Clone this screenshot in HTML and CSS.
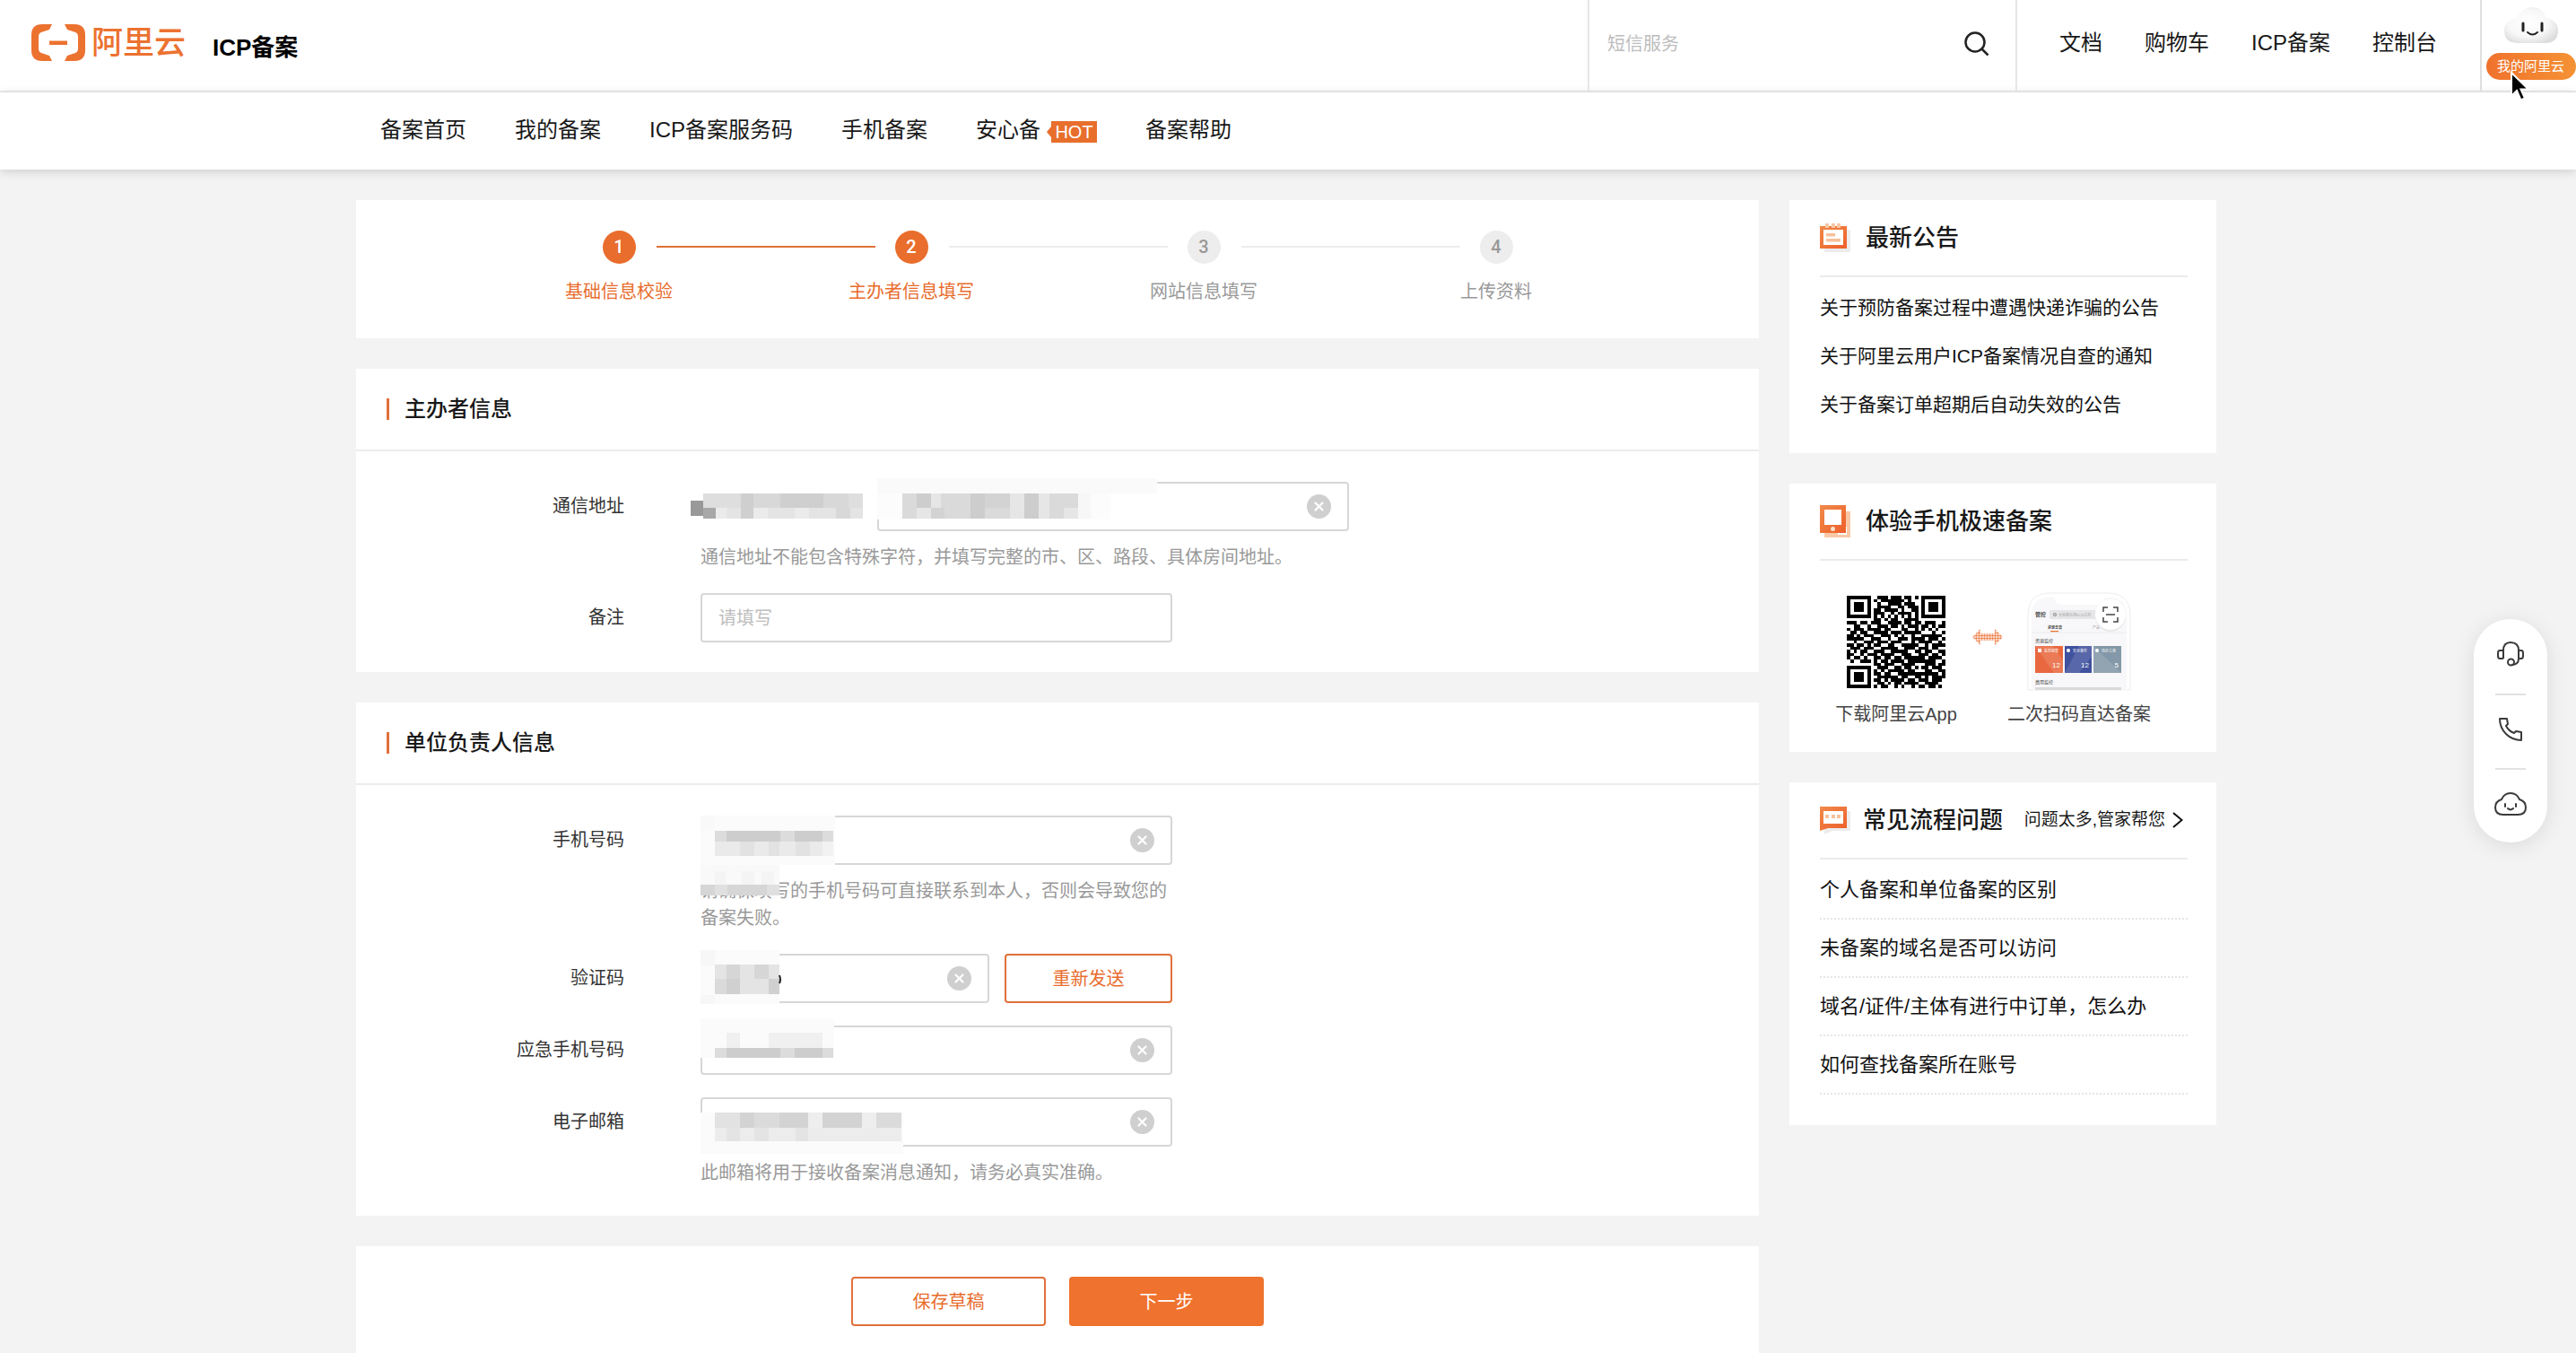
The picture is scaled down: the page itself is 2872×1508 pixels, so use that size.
FILE: index.html
```html
<!DOCTYPE html>
<html lang="zh-CN">
<head>
<meta charset="utf-8">
<title>ICP备案</title>
<link rel="stylesheet" href="styles.css">
</head>
<body>
<svg width="0" height="0" class="defs" aria-hidden="true">
  <defs>
    <linearGradient id="orange" x1="0" y1="0" x2="1" y2="1"><stop offset="0" stop-color="#f08a4a"/><stop offset="1" stop-color="#ee5f2a"/></linearGradient>
    <symbol id="clear" viewBox="0 0 27 27"><circle cx="13.5" cy="13.5" r="13.5" fill="#cfcfcf"/><path d="M9.500 9.500l8 8M17.500 9.500l-8 8" stroke="#fff" stroke-width="2.200" stroke-linecap="round"/></symbol>
  </defs>
</svg>

<header class="top">
  <a class="logo" href="#">
    <svg width="60" height="41" viewBox="0 0 60 41" fill="#ec7230"><path d="M23 0H12Q0 0 0 12V29Q0 41 12 41H23L20 35L11 32Q8 31 8 27V14Q8 10 11 9L20 6Z"/><path d="M37 0H48Q60 0 60 12V29Q60 41 48 41H37L40 35L49 32Q52 31 52 27V14Q52 10 49 9L40 6Z"/><path d="M20 18.500h20v4.500H20z"/></svg>
    <span class="logo-name">阿里云</span>
  </a>
  <a class="product" href="#">ICP备案</a>
  <form class="search">
    <input type="text" placeholder="短信服务" aria-label="搜索">
    <button type="button" aria-label="搜索"><svg width="30" height="30" viewBox="0 0 30 30" fill="none" stroke="#222" stroke-width="2.500"><circle cx="13" cy="13" r="10.500"/><path d="M20.500 20.500l7 7"/></svg></button>
  </form>
  <nav class="tools"><a href="#">文档</a><a href="#">购物车</a><a href="#">ICP备案</a><a href="#">控制台</a></nav>
  <a class="mine" href="#">
    <svg width="60" height="41" viewBox="0 0 60 41"><defs><radialGradient id="cloud" cx=".45" cy=".45" r=".62"><stop offset="0" stop-color="#fff"/><stop offset=".6" stop-color="#f8f8f8"/><stop offset="1" stop-color="#dcdcdc"/></radialGradient></defs><path d="M14 12Q20 0 31 0Q42 0 47 12Q60 15 60 26Q60 40 45 40H15Q0 40 0 26Q0 15 14 12Z" fill="url(#cloud)"/><path d="M21 18v8M42 18v8" stroke="#222" stroke-width="3" stroke-linecap="round"/><path d="M26 28q5.500 5 11 0" stroke="#222" stroke-width="2" fill="none" stroke-linecap="round"/></svg>
    <span>我的阿里云</span>
    <svg class="cursor" width="24" height="36" viewBox="0 0 24 36"><path d="M2 2V28L8 22L12.500 32.500L17 30.500L12.500 20.500H21Z" stroke="#fff" stroke-width="2"/></svg>
  </a>
</header>

<nav class="menu">
  <a href="#">备案首页</a><a href="#">我的备案</a><a href="#">ICP备案服务码</a><a href="#">手机备案</a><a class="with-hot" href="#">安心备<span class="hot">HOT</span></a><a href="#">备案帮助</a>
</nav>

<div class="page">
  <main>
    <ol class="card steps">
      <li class="done"><span class="num">1</span><span>基础信息校验</span></li>
      <li class="current"><span class="num">2</span><span>主办者信息填写</span></li>
      <li><span class="num">3</span><span>网站信息填写</span></li>
      <li><span class="num">4</span><span>上传资料</span></li>
    </ol>

    <section class="card">
      <h2>主办者信息</h2>
      <div class="fields">
        <div class="field">
          <label for="addr">通信地址</label>
          <div class="control wide">
            <div class="box push"><input id="addr" type="text"><button class="clear" type="button" aria-label="清除"><svg width="27" height="27"><use href="#clear"/></svg></button></div>
            <svg class="mask mask-addr" width="533" height="48" viewBox="0 0 533 48" shape-rendering="crispEdges">
              <path fill="#fafafa" d="M209 0h312v17h-312z"/><path fill="#fcfcfc" d="M209 17h260v29h-260z"/>
              <path fill="#999" d="M1 25h14v17H1z"/>
              <path fill="#dedede" d="M15 17h178v16H15z"/><path fill="#e4e4e4" d="M15 33h178v12H15z"/>
              <path fill="#a8a8a8" d="M15 33h14v12H15z"/>
              <path fill="#cfcfcf" d="M57 17h14v28H57zM101 17h48v16h-48z"/><path fill="#ebebeb" d="M29 33h12v12H29zM71 33h16v12H71zM117 33h16v12h-16z"/>
              <path fill="#d8d8d8" d="M71 17h30v16H71zM149 17h28v16h-28zM163 33h16v12h-16z"/>
              <path fill="#dadada" d="M237 17h196v28H237z"/><path fill="#cdcdcd" d="M253 17h16v16h-16zM313 17h16v28h-16zM373 17h16v28h-16z"/>
              <path fill="#e6e6e6" d="M269 17h11v16h-11zM253 33h16v12h-16zM357 17h16v28h-16zM389 17h12v28h-12zM417 33h16v12h-16z"/><path fill="#d3d3d3" d="M329 17h28v16h-28zM269 33h15v12h-15z"/>
              <path fill="#f7f7f7" d="M433 17h14v28h-14z"/>
            </svg>
            <p class="hint">通信地址不能包含特殊字符，并填写完整的市、区、路段、具体房间地址。</p>
          </div>
        </div>
        <div class="field">
          <label for="note">备注</label>
          <div class="control"><div class="box"><input id="note" type="text" placeholder="请填写"></div></div>
        </div>
      </div>
    </section>

    <section class="card">
      <h2>单位负责人信息</h2>
      <div class="fields">
        <div class="field">
          <label for="phone">手机号码</label>
          <div class="control">
            <div class="box"><input id="phone" type="text"><button class="clear" type="button" aria-label="清除"><svg width="27" height="27"><use href="#clear"/></svg></button></div>
            <svg class="mask" width="150" height="90" viewBox="0 0 150 90" shape-rendering="crispEdges">
              <path fill="#fbfbfb" d="M0 0h150v55H0z"/><path fill="#f9f9f9" d="M0 0h16v17H0zM0 55h88v34H0z"/><path fill="#f4f4f4" d="M16 62h12v15H16zM46 62h14v15H46zM68 62h14v15H68z"/>
              <path fill="#dcdcdc" d="M16 17h132v12H16z"/><path fill="#cdcdcd" d="M29 17h60v12H29zM105 17h31v12h-31z"/>
              <path fill="#eaeaea" d="M16 29h120v16H16z"/><path fill="#e2e2e2" d="M44 29h16v16H44zM76 29h12v16H76zM106 29h16v16h-16z"/><path fill="#f2f2f2" d="M136 29h12v16h-12z"/>
              <path fill="#d6d6d6" d="M0 77h88v12H0z"/><path fill="#e0e0e0" d="M16 77h14v12H16zM74 77h14v12H74z"/>
            </svg>
            <p class="hint">请确保填写的手机号码可直接联系到本人，否则会导致您的备案失败。</p>
          </div>
        </div>
        <div class="field">
          <label for="code">验证码</label>
          <div class="control pair">
            <div class="box"><input id="code" type="text"><button class="clear" type="button" aria-label="清除"><svg width="27" height="27"><use href="#clear"/></svg></button></div>
            <button class="btn" type="button">重新发送</button>
            <svg class="mask mask-up" width="92" height="60" viewBox="0 0 92 60">
              <path fill="#fbfbfb" d="M0 0h88v60H0z"/><path fill="#f7f7f7" d="M0 0h16v17H0zM0 50h16v10H0z"/>
              <path fill="#e4e4e4" d="M16 16h72v33H16z"/><path fill="#d6d6d6" d="M29 16h15v16H29zM60 16h16v16H60z"/><path fill="#d0d0d0" d="M29 32h15v17H29zM76 32h12v17H76z"/><path fill="#dadada" d="M16 32h13v17H16z"/>
              <path d="M88 28q2 5 0 9" stroke="#222" stroke-width="2" fill="none"/>
            </svg>
          </div>
        </div>
        <div class="field">
          <label for="phone2">应急手机号码</label>
          <div class="control">
            <div class="box"><input id="phone2" type="text"><button class="clear" type="button" aria-label="清除"><svg width="27" height="27"><use href="#clear"/></svg></button></div>
            <svg class="mask mask-high" width="149" height="44" viewBox="0 0 149 44" shape-rendering="crispEdges">
              <path fill="#fbfbfb" d="M0 0h149v44H0z"/><path fill="#f0f0f0" d="M29 16h15v17H29zM76 16h60v17H76z"/>
              <path fill="#dcdcdc" d="M16 33h132v11H16z"/><path fill="#cdcdcd" d="M29 33h60v11H29zM105 33h31v11h-31z"/>
            </svg>
          </div>
        </div>
        <div class="field">
          <label for="mail">电子邮箱</label>
          <div class="control">
            <div class="box"><input id="mail" type="text"><button class="clear" type="button" aria-label="清除"><svg width="27" height="27"><use href="#clear"/></svg></button></div>
            <svg class="mask mask-low" width="226" height="46" viewBox="0 0 226 46" shape-rendering="crispEdges">
              <path fill="#fbfbfb" d="M0 0h226v46H0z"/><path fill="#e2e2e2" d="M16 0h208v17H16z"/><path fill="#d3d3d3" d="M44 0h76v17H44zM136 0h44v17h-44z"/><path fill="#dbdbdb" d="M60 0h28v17H60zM196 0h28v17h-28z"/><path fill="#eee" d="M120 0h16v17h-16zM180 0h16v17h-16z"/>
              <path fill="#ececec" d="M16 17h208v15H16z"/><path fill="#e4e4e4" d="M29 17h15v15H29zM60 17h16v15H60zM106 17h14v15h-14z"/>
            </svg>
            <p class="hint">此邮箱将用于接收备案消息通知，请务必真实准确。</p>
          </div>
        </div>
      </div>
    </section>

    <div class="card actions">
      <button class="btn" type="button">保存草稿</button>
      <button class="btn primary" type="submit">下一步</button>
    </div>
  </main>

  <aside>
    <section class="card">
      <div class="head">
        <svg width="34" height="34" viewBox="0 0 34 34"><path fill="#ececec" d="M5 8h29v25H5z"/><path fill="url(#orange)" d="M0 4h30v25H0z"/><path fill="#f9c9a6" d="M6 1h4v5H6zM13 1h4v5h-4zM19 1h4v5h-4z"/><path fill="#fff" d="M4 8h22v17H4z"/><path fill="#f8c09a" d="M7 12h10v3.500H7zM7 18h16v3.500H7z"/></svg>
        <h3>最新公告</h3>
      </div>
      <ul class="news"><li><a href="#">关于预防备案过程中遭遇快递诈骗的公告</a></li><li><a href="#">关于阿里云用户ICP备案情况自查的通知</a></li><li><a href="#">关于备案订单超期后自动失效的公告</a></li></ul>
    </section>

    <section class="card">
      <div class="head">
        <svg width="34" height="36" viewBox="0 0 34 36"><path fill="#f9c9a6" d="M5 7h29v29H5z"/><path fill="#fff" d="M20 24h10v9H20z"/><path fill="url(#orange)" d="M0 0h29v31H0z"/><path fill="#fff" d="M5 5h19v17H5z"/><circle cx="14.500" cy="26.500" r="2.500" fill="#fde0cc"/></svg>
        <h3>体验手机极速备案</h3>
      </div>
      <div class="app">
        <figure><div class="shot"><svg id="qr" width="110" height="103" viewBox="0 0 29 29" preserveAspectRatio="none" shape-rendering="crispEdges"></svg></div><figcaption>下载阿里云App</figcaption></figure>
        <svg class="swap" width="34" height="18" viewBox="0 0 34 18"><defs><pattern id="dots" width="3" height="3" patternUnits="userSpaceOnUse"><circle cx="1.500" cy="1.500" r="1.300" fill="#ee7c45"/></pattern></defs><path fill="url(#dots)" d="M0 9L9 0V5H25V0L34 9L25 18V13H9V18Z"/></svg>
        <figure><div class="shot"><svg width="116" height="110" viewBox="0 0 116 110" font-size="5" fill="#444">
          <path d="M1 109V26Q1 1 26 1H90Q115 1 115 26V109Z" fill="#fff" stroke="#ededed"/>
          <path d="M5 109V26Q5 6 24 6H30Q32 14 40 14H76Q84 14 86 6H92Q111 6 111 26V109Z" fill="#f8f7f9"/>
          <text x="9" y="27" font-size="6" font-weight="700">管控</text><rect x="25" y="20" width="56" height="10" rx="2" fill="#e6e6e8"/><circle cx="31" cy="25" r="1.500" fill="none" stroke="#888"/><text x="35" y="27" font-size="4" fill="#aaa">大家都在搜ECS文档</text>
          <text x="23" y="41" font-size="4" font-weight="700">资源总览</text><path d="M26 43h9v1.500h-9z" fill="#ec7230"/><text x="73" y="41" font-size="4" fill="#999">产品</text><path d="M5 45h106" stroke="#ededed"/>
          <text x="9" y="56">资源监控</text>
          <path fill="#e9683f" d="M9 60h31v30H9z"/><path fill="#40529e" d="M42 60h30v30H42z"/><path fill="#8398a8" d="M74 60h31v30H74z"/>
          <path fill="#fff" opacity=".12" d="M9 60h20l11 16v14H30zM42 90l16-30h14v12L58 90zM74 60l31 30H74z"/>
          <g fill="#fff"><path d="M12 63h4v4h-4z"/><circle cx="46" cy="65" r="2"/><circle cx="78" cy="65" r="2"/><g font-size="4"><text x="19" y="67">监控报警</text><text x="51" y="67">安全事件</text><text x="83" y="67">待办工单</text></g><g font-size="8" text-anchor="end"><text x="37" y="84">12</text><text x="69" y="84">12</text><text x="102" y="84">5</text></g></g>
          <text x="9" y="102">费用监控</text><path fill="#dadadd" d="M9 106h96v3H9z"/>
          <circle cx="93" cy="27" r="17" fill="#e9e9ea"/><circle cx="93" cy="25" r="17" fill="#fff"/>
          <path d="M85 22v-5h5M96 17h5v5M85 28v5h5M96 33h5v-5M88 25h10" fill="none" stroke="#444" stroke-width="1.500"/>
        </svg></div><figcaption>二次扫码直达备案</figcaption></figure>
      </div>
    </section>

    <section class="card">
      <div class="head faq-head">
        <svg width="34" height="32" viewBox="0 0 34 32"><path fill="#ececec" d="M5 6h29v22H14l-9 4z"/><path fill="url(#orange)" d="M0 1h30v24H9l-9 3z"/><path fill="#fff" d="M4 6h22v14H4z"/><path fill="#f8c09a" d="M6 10h4v4H6zM13 10h4v4h-4zM19 10h4v4h-4z"/></svg>
        <h3>常见流程问题</h3>
        <a class="more" href="#">问题太多,管家帮您<svg width="12" height="18" viewBox="0 0 12 18" fill="none" stroke="#111" stroke-width="2"><path d="M1 1l9.500 8L1 17"/></svg></a>
      </div>
      <ul class="faq"><li><a href="#">个人备案和单位备案的区别</a></li><li><a href="#">未备案的域名是否可以访问</a></li><li><a href="#">域名/证件/主体有进行中订单，怎么办</a></li><li><a href="#">如何查找备案所在账号</a></li></ul>
    </section>
  </aside>
</div>

<div class="dock">
  <button type="button" aria-label="在线客服"><svg width="32" height="28" viewBox="0 0 32 28" fill="none" stroke="#3a3a3a" stroke-width="2"><path d="M8 19V10Q8 1 16 1Q25 1 25 10V19Q25 26 17 26"/><path d="M8 10H4Q2 10 2 13V16Q2 19 4 19H8M25 10H28Q30 10 30 13V16Q30 19 28 19H25"/><circle cx="16.500" cy="23" r="3.500"/></svg></button>
  <button type="button" aria-label="电话"><svg width="26" height="26" viewBox="0 0 26 26" fill="none" stroke="#3a3a3a" stroke-width="2" stroke-linejoin="round"><path d="M1 1H9L10 7L8 9Q11 15 17 17L19 15L25 16V25Q15 25 8 18Q1 11 1 1Z"/></svg></button>
  <button type="button" aria-label="智能助手"><svg width="36" height="26" viewBox="0 0 36 26" fill="none" stroke="#3a3a3a" stroke-width="2" stroke-linecap="round"><path d="M8 8Q11 1 18 1Q25 1 28 8Q35 10 35 17Q35 25 26 25H10Q1 25 1 17Q1 10 8 8Z"/><path d="M12 13v3M24 13v3M15 18q3 3 6 0"/></svg></button>
</div>
<script src="qr.js"></script>
</body>
</html>
```
FILE: styles.css
```css
* { box-sizing: border-box; }
body {
  margin: 0;
  min-height: 100vh;
  background: #f3f3f3;
  color: #181818;
  font: 20px/30px "Liberation Sans", "Noto Sans CJK SC", sans-serif;
}
a { color: inherit; text-decoration: none; }
button, input { font: inherit; color: inherit; }
button { padding: 0; border: 0; background: none; cursor: pointer; }
ul, ol { list-style: none; margin: 0; padding: 0; }
h2, h3, p, figure { margin: 0; }
svg { display: block; flex: none; }
.defs { position: absolute; }

.top {
  display: flex;
  height: 103px;
  background: #fff;
  border-bottom: 2px solid #ececec;
}
.logo { display: flex; align-items: center; gap: 7px; height: 95px; margin-left: 35px; }
.logo-name { color: #ec7230; font-size: 35px; line-height: 40px; font-weight: 500; }
.product { margin-left: 30px; color: #000; font-size: 26px; line-height: 106px; font-weight: 700; }
.search {
  display: flex;
  align-items: center;
  width: 479px;
  margin-left: auto;
  padding: 0 28px 4px 20px;
  border: solid #e6e6e6;
  border-width: 0 2px;
}
.search input { flex: 1; min-width: 0; padding: 0; border: 0; outline: 0; }
::placeholder { color: #bdbdbd; opacity: 1; }
.tools {
  display: flex;
  gap: 47px;
  padding: 0 48px 0 47px;
  font-size: 24px;
  line-height: 96px;
}
.mine {
  position: relative;
  display: flex;
  flex-direction: column;
  align-items: center;
  gap: 10px;
  width: 107px;
  padding: 8px 0 0 4px;
  border-left: 2px solid #dedede;
}
.mine span {
  width: 100px;
  border-radius: 15px;
  background: linear-gradient(90deg, #f0722d, #f59235);
  color: #fff;
  font-size: 15px;
  line-height: 30px;
  text-align: center;
}
.cursor { position: absolute; left: 31px; top: 79px; z-index: 2; }

.menu {
  display: flex;
  gap: 54px;
  padding-left: 424px;
  height: 86px;
  background: #fff;
  box-shadow: 0 2px 10px rgba(0, 0, 0, .16);
  font-size: 24px;
  line-height: 84px;
}
.with-hot { display: flex; align-items: flex-start; gap: 12px; }
.hot {
  position: relative;
  width: 51px;
  margin-top: 32px;
  background: #e86e2c;
  color: #fff;
  font-size: 20px;
  line-height: 24px;
  text-align: center;
}
.hot::before {
  content: "";
  position: absolute;
  left: -5px;
  top: 6px;
  border: solid transparent;
  border-width: 6px 5px 6px 0;
  border-right-color: #e86e2c;
}

.page {
  display: grid;
  grid-template-columns: minmax(0, 1fr) 476px;
  align-items: start;
  gap: 34px;
  max-width: 2078px;
  margin: 34px auto 0;
  padding-right: 4px;
}
main, aside { display: flex; flex-direction: column; gap: 34px; }
.card { background: #fff; }

.steps { display: flex; justify-content: center; padding: 34px 0 37px; }
.steps li {
  position: relative;
  display: flex;
  flex-direction: column;
  align-items: center;
  gap: 16px;
  width: 326px;
  color: #999;
}
.num {
  width: 37px;
  border-radius: 50%;
  background: #ededed;
  font-family: Roboto, sans-serif;
  font-weight: 500;
  line-height: 37px;
  text-align: center;
}
.steps li:not(:last-child)::after {
  content: "";
  position: absolute;
  left: 205px;
  top: 17px;
  width: 244px;
  height: 2px;
  background: #ededed;
}
.steps .done, .steps .current { color: #e86c2c; }
.steps .done .num, .steps .current .num { background: #e96d2c; color: #fff; }
.steps li.done:not(:last-child)::after { background: #e07038; }

h2 {
  display: flex;
  align-items: center;
  gap: 17px;
  height: 92px;
  padding-left: 34px;
  border-bottom: 2px solid #ececec;
  font-size: 24px;
  font-weight: 500;
}
h2::before { content: ""; width: 3px; height: 24px; background: #e0703a; }
.fields { display: flex; flex-direction: column; gap: 25px; padding: 34px 0 33px; }
.field { display: grid; grid-template-columns: 299px 1fr; gap: 85px; }
.field label { color: #333; line-height: 55px; text-align: right; }
.control { position: relative; width: 526px; }
.control.wide { width: 723px; }
.pair { display: flex; gap: 17px; }
.pair .box { flex: 1; min-width: 0; }
.pair .btn { flex: none; width: 187px; }
.box {
  display: flex;
  align-items: center;
  height: 55px;
  padding: 0 18px;
  border: 2px solid #d7d7d7;
  border-radius: 4px;
}
.box.push { margin-left: 197px; }
.box input { flex: 1; min-width: 0; padding: 0; border: 0; outline: 0; background: none; }
.hint { margin-top: 14px; color: #999; }
.mask { position: absolute; left: 0; top: 0; }
.mask-addr { left: -12px; top: -4px; }
.mask-up { top: -4px; }
.mask-high { top: -8px; }
.mask-low { top: 17px; }

.btn {
  height: 55px;
  padding: 0 16px;
  border: 2px solid #e0703a;
  border-radius: 4px;
  color: #e86c2c;
}
.primary { border-color: #ef722e; background: #ef722e; color: #fff; }
.actions { display: flex; justify-content: center; gap: 26px; padding: 34px 0 30px; }
.actions .btn { width: 217px; }

aside .card { padding: 0 32px 0 34px; }
.head { display: flex; align-items: center; gap: 17px; height: 86px; border-bottom: 2px solid #ebebeb; }
.faq-head { gap: 14px; }
h3 { font-size: 26px; font-weight: 500; white-space: nowrap; }
.more { display: flex; align-items: center; gap: 8px; margin: 0 5px 0 auto; font-size: 19px; white-space: nowrap; }
.news { padding: 7px 0 27px; font-size: 21px; line-height: 54px; white-space: nowrap; }
.news, .faq { color: #111; }
.faq { padding: 2px 0 34px; font-size: 22px; line-height: 63px; white-space: nowrap; }
.faq li { border-bottom: 2px dotted #e6e6e6; }
.app { display: grid; grid-template-columns: 170px 34px 170px; padding: 35px 0 27px; }
.app figure { display: flex; flex-direction: column; align-items: center; gap: 11px; }
.shot { display: flex; align-items: center; height: 110px; }
figcaption { color: #444; }
.swap { margin-top: 41px; }

.dock {
  position: fixed;
  right: 32px;
  top: 690px;
  width: 82px;
  padding: 0 24px;
  border-radius: 41px;
  background: #fff;
  box-shadow: 0 4px 24px rgba(0, 0, 0, .1);
}
.dock button {
  display: flex;
  align-items: center;
  justify-content: center;
  width: 100%;
  height: 83px;
  padding-bottom: 6px;
}
.dock button + button { border-top: 2px solid #e2e2e2; }
```
FILE: qr.js
```js
const rows = [
  "11111110011101110110101111111",
  "10000010101111111010001000001",
  "10111010010011110111001011101",
  "10111010011110011011101011101",
  "10111010110111101001101011101",
  "10000010111001011110101000001",
  "11111110101010101010101111111",
  "00000000110101100111100000000",
  "11101101110011110110110111001",
  "00110010011101101011101101011",
  "10111011110110001100101010100",
  "01101100111101110111110001001",
  "11010111001110101001001111110",
  "11111001110010011101111011101",
  "00100111011101110001011110010",
  "11011010110011001111100101111",
  "01110111001111100111011101100",
  "10101100111001111100110110011",
  "11001011101111001110011101101",
  "10110100110110110111111011110",
  "01001110101101111011111111001",
  "00000000110111001111000111011",
  "11111110011100110110101101110",
  "10000010101011111011000110011",
  "10111010110110011111111111101",
  "10111010011111101100110101111",
  "10111010110101111011011101110",
  "10000010011010110111100111100",
  "11111110101100101001011011010"
];

let path = "";
rows.forEach((row, y) => {
  for (const run of row.matchAll(/1+/g)) {
    path += `M${run.index} ${y}h${run[0].length}v1h-${run[0].length}z`;
  }
});

const shape = document.createElementNS("http://www.w3.org/2000/svg", "path");
shape.setAttribute("d", path);
document.getElementById("qr").append(shape);
```
